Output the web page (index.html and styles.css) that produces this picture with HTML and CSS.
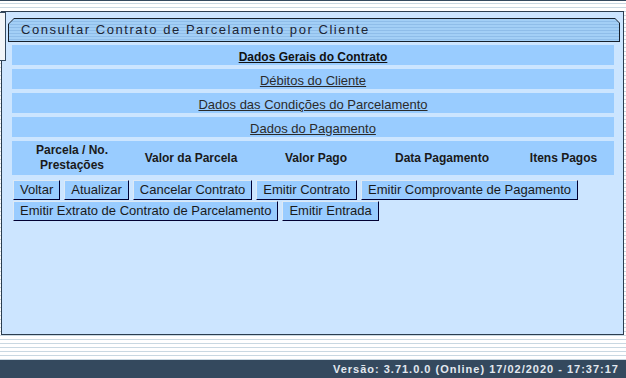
FILE: index.html
```html
<!DOCTYPE html>
<html lang="pt-br">
<head>
  <meta charset="UTF-8">
  <title>Consultar Contrato de Parcelamento por Cliente</title>
  <link rel="stylesheet" href="styles.css">
</head>
<body>

  <div class="topo"></div>

  <!-- caixa lateral recolhida -->
  <div class="lateral"></div>

  <!-- PAINEL PRINCIPAL -->
  <div class="painel">
    <div class="titulo">
      <div class="titulo-faixa">Consultar Contrato de Parcelamento por Cliente</div>
    </div>

    <div class="abas">
      <div class="aba"><a href="#" class="forte">Dados Gerais do Contrato</a></div>
      <div class="aba"><a href="#">Débitos do Cliente</a></div>
      <div class="aba"><a href="#">Dados das Condições do Parcelamento</a></div>
      <div class="aba"><a href="#">Dados do Pagamento</a></div>
    </div>

    <div class="cabecalho">
      <div>Parcela / No.<br>Prestações</div>
      <div>Valor da Parcela</div>
      <div>Valor Pago</div>
      <div>Data Pagamento</div>
      <div class="ultima">Itens Pagos</div>
    </div>

    <div class="acoes">
      <button>Voltar</button>
      <button>Atualizar</button>
      <button>Cancelar Contrato</button>
      <button>Emitir Contrato</button>
      <button>Emitir Comprovante de Pagamento</button>
      <button>Emitir Extrato de Contrato de Parcelamento</button>
      <button>Emitir Entrada</button>
    </div>
  </div>

  <!-- RODAPE -->
  <div class="rodape">Versão: 3.71.0.0 (Online) 17/02/2020 - 17:37:17</div>

</body>
</html>
```

FILE: styles.css
```css
body {
  margin: 0;
  height: 378px;
  overflow: hidden;
  font-family: "Liberation Sans", Arial, sans-serif;
  background: repeating-linear-gradient(to bottom, #ffffff 0 3px, #c9d8e2 3px 4px);
}

.topo {
  height: 1px;
  background-color: #34495e;
}

.lateral {
  position: absolute;
  left: 0;
  top: 12px;
  width: 5px;
  height: 47px;
  background-color: #f2f5f8;
  border: 1px solid #34495e;
  border-left: none;
}

.painel {
  box-sizing: border-box;
  width: 623px;
  height: 324px;
  margin: 10px 0 0 1px;
  background-color: #cce5ff;
  border: 1px solid #2c3e50;
}

.titulo {
  height: 24px;
  margin: 6px 3px 0 6px;
  padding: 1px;
  box-sizing: border-box;
  background-color: #16202c;
  clip-path: polygon(6px 0, calc(100% - 5px) 0, 100% 5px, 100% 100%, 0 100%, 0 6px);
}

.titulo-faixa {
  height: 22px;
  line-height: 22px;
  padding-left: 12px;
  font-size: 13px;
  letter-spacing: 1.55px;
  color: #1c2434;
  background: repeating-linear-gradient(to bottom, #a3cff6 0 2px, #8fbde9 2px 3px);
  clip-path: polygon(5px 0, calc(100% - 4px) 0, 100% 4px, 100% 100%, 0 100%, 0 5px);
}

.abas {
  display: flex;
  flex-direction: column;
  gap: 4px;
  margin: 3px 9px 0 10px;
}

.aba {
  height: 20px;
  line-height: 21px;
  text-align: center;
  background-color: #99ccff;
}

.aba a {
  font-size: 13px;
  color: #2b2b2b;
}

.aba a.forte {
  font-size: 12px;
  font-weight: bold;
  color: #111111;
}

.cabecalho {
  display: grid;
  grid-template-columns: 120px 118px 132px 120px 111px;
  align-items: center;
  height: 34px;
  margin: 4px 9px 0 10px;
  background-color: #99ccff;
  text-align: center;
  font-size: 12px;
  font-weight: bold;
  line-height: 15px;
  color: #1a1a1a;
}

.cabecalho .ultima {
  padding-left: 12px;
}

.acoes {
  display: flex;
  flex-wrap: wrap;
  gap: 1px 4px;
  padding: 5px 0 0 11px;
}

button {
  padding: 1px 6px;
  font-family: "Liberation Sans", Arial, sans-serif;
  font-size: 13px;
  line-height: 16px;
  color: #1a1a1a;
  background-color: #99ccff;
  border: 1px solid;
  border-color: #dde9f5 #000033 #000033 #dde9f5;
  cursor: pointer;
}

.rodape {
  height: 18px;
  margin-top: 25px;
  padding-right: 7px;
  line-height: 18px;
  text-align: right;
  font-size: 11px;
  font-weight: bold;
  letter-spacing: 1px;
  color: #e2e8ef;
  background-color: #34495e;
}
```
